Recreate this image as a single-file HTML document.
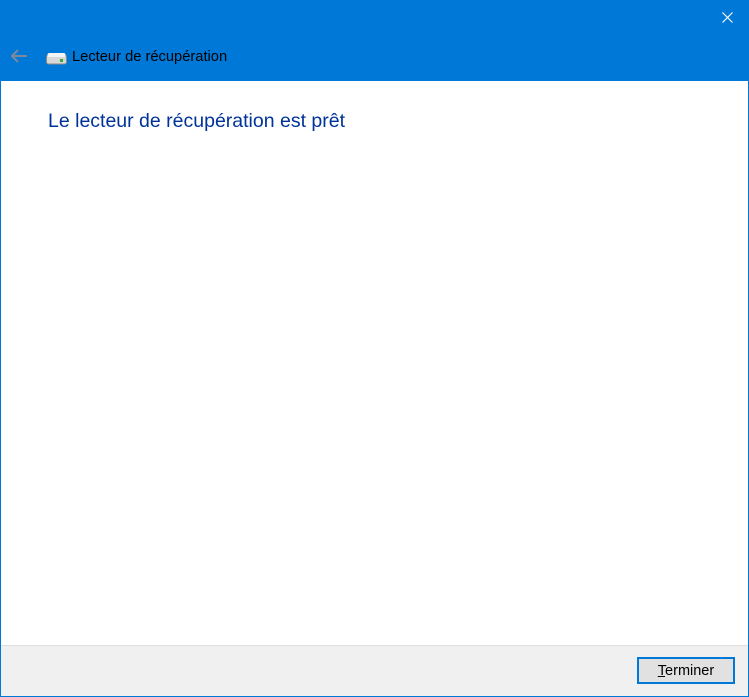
<!DOCTYPE html>
<html><head><meta charset="utf-8"><style>
*{margin:0;padding:0;box-sizing:border-box}
body{width:749px;height:697px;position:relative;overflow:hidden;font-family:"Segoe UI","Liberation Sans",sans-serif;background:#0078d7}
.win{position:absolute;left:1px;top:0;width:747px;height:696px;}
.hdr{position:absolute;left:0;top:0;width:747px;height:81px;background:#0078d7}
.content{position:absolute;left:0;top:81px;width:747px;height:564px;background:#fff}
.foot{position:absolute;left:0;top:645px;width:747px;height:51px;background:#f0f0f0;border-top:1px solid #dfdfdf}
.title{position:absolute;left:71px;top:49px;font-size:14.7px;color:#000}
.h1{position:absolute;left:47px;top:29px;font-size:19.5px;color:#003399}
.btn{position:absolute;left:636px;top:11px;width:98px;height:27px;border:2px solid #0078d7;background:#e1e1e1;font-size:14.5px;text-align:center;line-height:25px;color:#000}
</style></head><body>
<div class="win">
<div class="hdr">
<svg style="position:absolute;left:721px;top:12px" width="11" height="11" viewBox="0 0 11 11"><path d="M0.5 0.5 L10.5 10.5 M10.5 0.5 L0.5 10.5" stroke="#fff" stroke-width="1.2"/></svg>
<svg style="position:absolute;left:9px;top:49px" width="18" height="14" viewBox="0 0 18 14"><path d="M8 1 L2 7 L8 13 M2 7 H17" stroke="#7f8a99" stroke-width="2" fill="none"/></svg>
<svg style="position:absolute;left:45px;top:52px" width="21" height="13" viewBox="0 0 21 13"><rect x="0.5" y="3" width="20" height="9" rx="2" fill="#d8d8d8" stroke="#888"/><rect x="1.5" y="1" width="18" height="4" rx="2" fill="#f4f4f4"/><rect x="14" y="7" width="3" height="3" fill="#3a3"/></svg>
<div class="title">Lecteur de récupération</div>
</div>
<div class="content"><div class="h1">Le lecteur de récupération est prêt</div></div>
<div class="foot"><div class="btn"><u>T</u>erminer</div></div>
</div>
</body></html>
